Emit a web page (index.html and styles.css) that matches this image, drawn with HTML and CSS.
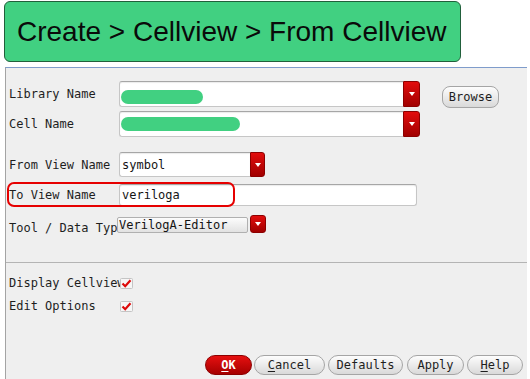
FILE: index.html
```html
<!DOCTYPE html>
<html>
<head>
<meta charset="utf-8">
<link rel="stylesheet" href="styles.css">
</head>
<body>
<div class="banner">Create &gt; Cellview &gt; From Cellview</div>
<div class="dialog">
  <div class="row row-lib">
    <span class="label">Library Name</span>
    <div class="combo combo-wide">
      <div class="field"><span class="blob blob-lib"></span></div>
      <div class="drop"><span class="tri"></span></div>
    </div>
    <button class="btn browse">Browse</button>
  </div>
  <div class="row row-cell">
    <span class="label">Cell Name</span>
    <div class="combo combo-wide">
      <div class="field"><span class="blob blob-cell"></span></div>
      <div class="drop"><span class="tri"></span></div>
    </div>
  </div>
  <div class="row row-from">
    <span class="label">From View Name</span>
    <div class="combo combo-short">
      <div class="field"><span class="val">symbol</span></div>
      <div class="drop drop-narrow"><span class="tri"></span></div>
    </div>
  </div>
  <div class="row row-to">
    <div class="highlight"></div>
    <span class="label">To View Name</span>
    <div class="field text-field"><span class="val">veriloga</span></div>
  </div>
  <div class="row row-tool">
    <span class="label label-over">Tool / Data Type</span>
    <div class="select"><span class="val">VerilogA-Editor</span></div>
    <div class="drop drop-solo"><span class="tri"></span></div>
  </div>
  <div class="sep"></div>
  <div class="row row-check row-display">
    <span class="label label-over">Display Cellview</span>
    <svg class="check" width="13" height="11" viewBox="0 0 13 11"><rect x="0.5" y="0.5" width="12" height="10" rx="1" fill="#f6f6f6" stroke="#c4c4c4"/><path d="M2.5 5.5 L5.2 8.2 L10.5 2.2" fill="none" stroke="#dd0a0a" stroke-width="2.2"/></svg>
  </div>
  <div class="row row-check row-edit">
    <span class="label">Edit Options</span>
    <svg class="check" width="13" height="11" viewBox="0 0 13 11"><rect x="0.5" y="0.5" width="12" height="10" rx="1" fill="#f6f6f6" stroke="#c4c4c4"/><path d="M2.5 5.5 L5.2 8.2 L10.5 2.2" fill="none" stroke="#dd0a0a" stroke-width="2.2"/></svg>
  </div>
  <div class="actions">
    <button class="btn pill ok"><u>O</u>K</button>
    <button class="btn pill cancel"><u>C</u>ancel</button>
    <button class="btn pill defaults">Defaults</button>
    <button class="btn pill apply">Apply</button>
    <button class="btn pill help"><u>H</u>elp</button>
  </div>
</div>
</body>
</html>
```
FILE: styles.css
```css
html, body {
  margin: 0;
  padding: 0;
  background: #ffffff;
  width: 530px;
  height: 379px;
  overflow: hidden;
}

.banner {
  margin: 1px 0 0 4px;
  height: 59px;
  width: 443px;
  border: 1px solid #215f3b;
  border-radius: 6px;
  background: #41d081;
  display: flex;
  align-items: center;
  padding-left: 12px;
  box-sizing: content-box;
  font-family: "Liberation Sans", Arial, sans-serif;
  font-size: 28px;
  color: #0a0a0a;
  white-space: nowrap;
}

.dialog {
  margin: 5px 0 0 5px;
  width: 518px;
  height: 298px;
  background: #efefef;
  border-top: 1px solid #7f9ccb;
  border-left: 1px solid #a4a4a4;
  padding: 13px 0 0 3px;
  box-sizing: content-box;
  display: flex;
  flex-direction: column;
  font-family: "DejaVu Sans Mono", monospace;
  font-size: 12px;
  color: #1e1e1e;
}

.row {
  display: flex;
  align-items: center;
  position: relative;
}

.label {
  width: 110px;
  flex: none;
  white-space: nowrap;
  overflow: hidden;
}
.label-over {
  overflow: visible;
}

.row-lib { height: 26px; align-items: flex-start; }
.row-lib .label { margin-top: 6px; }
.row-cell { height: 26px; margin-top: 4px; }
.row-from { height: 25px; margin-top: 15px; }
.row-to { height: 25px; margin-top: 5px; }
.row-tool { height: 18px; margin-top: 8px; }
.row-tool .label { margin-top: 7px; }
.row-display { height: 16px; margin-top: 2px; }
.row-edit { height: 16px; margin-top: 7px; }

.combo {
  display: flex;
  height: 100%;
}
.combo-wide { width: 301px; }
.combo-short { width: 146px; }

.field {
  flex: 1;
  background: #ffffff;
  border: 1px solid #c6c6c6;
  border-top-color: #a6a6a6;
  border-right: none;
  border-radius: 3px 0 0 3px;
  box-shadow: inset 0 1px 1px rgba(0, 0, 0, 0.08);
  display: flex;
  align-items: center;
  padding-left: 2px;
  box-sizing: border-box;
}

.val {
  color: #141414;
}

.blob {
  display: block;
  height: 14px;
  border-radius: 7px;
  background: #41d081;
}
.blob-lib { width: 82px; margin-top: 6px; margin-left: -1px; }
.blob-cell { width: 119px; margin-left: -1px; }

.drop {
  width: 17px;
  flex: none;
  background: linear-gradient(#e20d0d, #a10000);
  border: 1px solid #8c0000;
  border-radius: 0 3px 3px 0;
  box-sizing: border-box;
  display: flex;
  align-items: center;
  justify-content: center;
}
.drop-narrow { width: 15px; }
.drop-solo {
  height: 18px;
  width: 16px;
  margin-left: 2px;
  border-radius: 3px;
}

.tri {
  width: 0;
  height: 0;
  border-left: 3px solid transparent;
  border-right: 3px solid transparent;
  border-top: 4px solid #ffffff;
}

.browse {
  margin-left: 22px;
  margin-top: 5px;
  width: 57px;
  height: 22px;
  border-radius: 8px;
}

.btn {
  font-family: "DejaVu Sans Mono", monospace;
  font-size: 12px;
  color: #1e1e1e;
  background: linear-gradient(#fdfdfd, #d9d9d9);
  border: 1px solid #a5a5a5;
  padding: 0;
  box-sizing: border-box;
  display: flex;
  align-items: center;
  justify-content: center;
}

.text-field {
  flex: none;
  width: 298px;
  height: 22px;
  border-right: 1px solid #c6c6c6;
  border-radius: 3px;
}

.highlight {
  position: absolute;
  left: -2px;
  top: 0;
  width: 224px;
  height: 21px;
  border: 2px solid #e60000;
  border-radius: 7px;
  z-index: 2;
  pointer-events: none;
}

.select {
  position: relative;
  z-index: 1;
  width: 131px;
  height: 16px;
  margin-left: -2px;
  margin-top: 2px;
  background: linear-gradient(#fcfcfc, #e2e2e2);
  border: 1px solid #b0b0b0;
  border-radius: 2px;
  box-sizing: border-box;
  display: flex;
  align-items: center;
  padding-left: 1px;
}

.sep {
  margin-top: 29px;
  margin-left: -3px;
  height: 1px;
  background: #b4b4b4;
  margin-bottom: 10px;
}

.row-check .label { width: 111px; }
.check { flex: none; position: relative; z-index: 1; }

.actions {
  margin-top: auto;
  margin-bottom: 4px;
  display: flex;
  padding-left: 196px;
}

.pill {
  height: 20px;
  border-radius: 10px;
}
.ok {
  width: 47px;
  background: linear-gradient(#e61010, #a60000);
  border-color: #8c0000;
  color: #ffffff;
  font-weight: bold;
}
.cancel { width: 71px; margin-left: 2px; }
.defaults { width: 75px; margin-left: 3px; }
.apply { width: 57px; margin-left: 4px; }
.help { width: 56px; margin-left: 3px; }

u { text-decoration: underline; text-underline-offset: 2px; }
```
